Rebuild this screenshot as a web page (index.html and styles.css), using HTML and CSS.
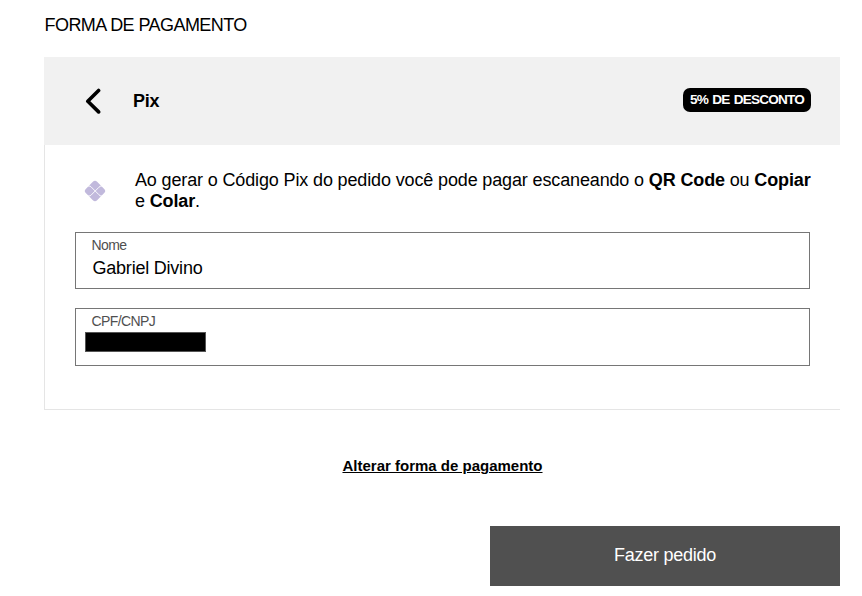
FILE: index.html
```html
<!DOCTYPE html>
<html lang="pt-BR">
<head>
    <meta charset="UTF-8">
    <meta name="viewport" content="width=device-width, initial-scale=1.0">
    <title>Forma de pagamento</title>
    <link rel="stylesheet" href="styles.css">
</head>
<body>
<main class="checkout">
    <h2 class="title">FORMA DE PAGAMENTO</h2>

    <section class="payment">
        <div class="payment-header">
            <svg class="back" width="16" height="26" viewBox="0 0 16 26">
                <path d="M13.6 2.5 L2.8 13.2 L13.6 23.9" fill="none" stroke="#000" stroke-width="3.6" stroke-linecap="round" stroke-linejoin="round"/>
            </svg>
            <strong class="method">Pix</strong>
            <span class="badge">5% DE DESCONTO</span>
        </div>

        <div class="payment-body">
            <div class="info">
                <svg class="pix-icon" width="22" height="22" viewBox="0 0 22 22">
                    <rect x="3" y="3" width="16" height="16" rx="3" transform="rotate(45 11 11)" fill="#c1b9dc"/>
                    <path d="M4 6 H5 Q6.2 6 7 6.8 L15 14.8 Q16 16 17 16 H18.3 M4 16 H5 Q6.2 16 7 15.2 L15 7.2 Q16 6 17 6 H18.3" fill="none" stroke="#fff" stroke-width="0.9"/>
                </svg>
                <p>Ao gerar o Código Pix do pedido você pode pagar escaneando o <b>QR Code</b> ou <b>Copiar</b> e <b>Colar</b>.</p>
            </div>

            <div class="field">
                <span class="label">Nome</span>
                <span class="value">Gabriel Divino</span>
            </div>
            <div class="field field-document">
                <span class="label">CPF/CNPJ</span>
                <span class="hidden-value"></span>
            </div>
        </div>
    </section>

    <a class="change" href="#">Alterar forma de pagamento</a>
    <button class="submit" type="button">Fazer pedido</button>
</main>
</body>
</html>
```
FILE: styles.css
```css
* {
    box-sizing: border-box;
}

body {
    margin: 0;
    background-color: #fff;
    color: #000;
    font-family: "Liberation Sans", Arial, sans-serif;
    font-size: 18px;
}

.checkout {
    display: flex;
    flex-direction: column;
    width: 840px;
    padding: 15px 0 0 44px;
}

.title {
    margin: 0 0 21px 0.5px;
    font-size: 18px;
    font-weight: normal;
    line-height: 21px;
    letter-spacing: -0.56px;
}

.payment {
    height: 353px;
    border-left: 1px solid #e5e5e5;
    border-bottom: 1px solid #e5e5e5;
}

.payment-header {
    display: flex;
    align-items: center;
    height: 88px;
    margin-left: -1px;
    padding: 0 29px 0 41px;
    background-color: #f1f1f1;
}

.method {
    margin-left: 32px;
    letter-spacing: -0.3px;
}

.badge {
    display: flex;
    justify-content: center;
    width: 128px;
    height: 24px;
    margin: -2px 0 0 auto;
    border-radius: 7px;
    background-color: #000;
    color: #fff;
    font-size: 13.6px;
    font-weight: bold;
    line-height: 23px;
    letter-spacing: -0.8px;
    word-spacing: 1.2px;
    white-space: nowrap;
}

.payment-body {
    padding: 25px 29px 0 30px;
}

.info {
    display: flex;
    margin-bottom: 20px;
}

.pix-icon {
    flex: none;
    margin: 10px 29px 0 9px;
}

.info p {
    margin: 0;
    line-height: 21px;
    letter-spacing: -0.14px;
}

.field {
    display: flex;
    flex-direction: column;
    height: 57px;
    margin: 0 1px 19px 0;
    padding: 4px 16px 4px 15.5px;
    border: 1px solid #767676;
}

.field-document {
    height: 58px;
}

.label {
    color: #4f4f4f;
    font-size: 14px;
    line-height: 16px;
    letter-spacing: -0.6px;
}

.value {
    margin: 5px 0 0 1px;
    line-height: 21px;
    letter-spacing: -0.22px;
}

.hidden-value {
    width: 121px;
    height: 20px;
    margin: 3px 0 0 -6.5px;
    border: 1px solid #555;
    background-color: #000;
}

.change {
    align-self: center;
    margin: 47px 0 0 1px;
    color: #000;
    font-size: 15px;
    font-weight: bold;
    line-height: 18px;
}

.submit {
    align-self: flex-end;
    width: 350px;
    height: 60px;
    margin-top: 51px;
    padding: 0 0 2px;
    border: none;
    background-color: #505050;
    color: #fff;
    font-family: inherit;
    font-size: 18px;
    letter-spacing: -0.25px;
    cursor: pointer;
}
```
